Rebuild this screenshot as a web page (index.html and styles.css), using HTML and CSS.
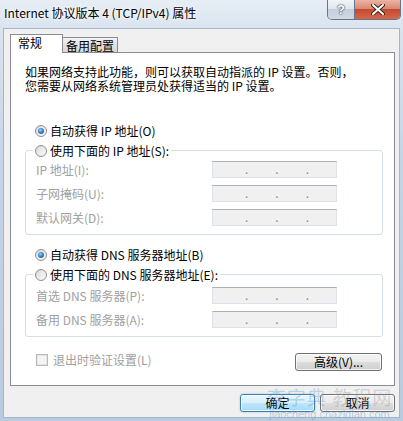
FILE: index.html
```html
<!DOCTYPE html>
<html lang="zh-CN">
<head>
<meta charset="utf-8">
<title>Internet 协议版本 4 (TCP/IPv4) 属性</title>
<link rel="stylesheet" href="styles.css">
</head>
<body>
<div class="window">
  <div class="titlebar">
    <span class="title">Internet 协议版本 4 (TCP/IPv4) 属性</span>
    <div class="caption-btns">
      <span class="cbtn help">?</span>
      <span class="cbtn close">
        <svg width="14" height="11" viewBox="0 0 14 11"><path d="M2 1 L12 10 M12 1 L2 10" stroke="#3a2520" stroke-width="4" stroke-linecap="round"/><path d="M2 1 L12 10 M12 1 L2 10" stroke="#ffffff" stroke-width="2" stroke-linecap="round"/></svg>
      </span>
    </div>
  </div>
  <div class="client">
    <div class="tabs">
      <span class="tab active">常规</span>
      <span class="tab">备用配置</span>
    </div>
    <div class="panel">
      <p class="intro">如果网络支持此功能，则可以获取自动指派的 IP 设置。否则，<br>您需要从网络系统管理员处获得适当的 IP 设置。</p>

      <div class="radio-row first"><span class="radio checked"></span>自动获得 IP 地址(O)</div>
      <div class="group">
        <div class="legend"><span class="radio"></span>使用下面的 IP 地址(S):</div>
        <div class="fields ip-fields">
          <span class="flabel">IP 地址(I):</span>
          <span class="ipbox"><span class="dot first">.</span><span class="dot">.</span><span class="dot">.</span></span>
          <span class="flabel">子网掩码(U):</span>
          <span class="ipbox"><span class="dot first">.</span><span class="dot">.</span><span class="dot">.</span></span>
          <span class="flabel">默认网关(D):</span>
          <span class="ipbox"><span class="dot first">.</span><span class="dot">.</span><span class="dot">.</span></span>
        </div>
      </div>

      <div class="radio-row"><span class="radio checked"></span>自动获得 DNS 服务器地址(B)</div>
      <div class="group">
        <div class="legend"><span class="radio"></span>使用下面的 DNS 服务器地址(E):</div>
        <div class="fields dns-fields">
          <span class="flabel">首选 DNS 服务器(P):</span>
          <span class="ipbox"><span class="dot first">.</span><span class="dot">.</span><span class="dot">.</span></span>
          <span class="flabel">备用 DNS 服务器(A):</span>
          <span class="ipbox"><span class="dot first">.</span><span class="dot">.</span><span class="dot">.</span></span>
        </div>
      </div>

      <div class="footer-row">
        <div class="check-row"><span class="checkbox"></span>退出时验证设置(L)</div>
        <span class="btn advanced">高级(V)...</span>
      </div>
    </div>
    <div class="buttons">
      <span class="btn default">确定</span>
      <span class="btn">取消</span>
    </div>
  </div>
  <div class="watermark">
    <span class="wm-big"><span class="wm-blue">查字典</span> 教程网</span>
    <span class="wm-small">jiaocheng.chazidian.com</span>
  </div>
</div>
</body>
</html>
```

FILE: styles.css
```css
html, body {
  margin: 0;
  padding: 0;
}

body {
  width: 403px;
  height: 421px;
  overflow: hidden;
  font-family: "Noto Sans CJK SC", "Liberation Sans", sans-serif;
  font-size: 12px;
  color: #000;
}

.window {
  position: relative;
  width: 403px;
  height: 421px;
  box-sizing: border-box;
  display: flex;
  flex-direction: column;
  background: linear-gradient(180deg, #e6edf5 0%, #d8e3ee 8%, #c4d4e5 40%, #b9cbde 100%);
}

/* ---------- title bar ---------- */
.titlebar {
  height: 28px;
  flex: none;
  display: flex;
  align-items: flex-start;
}

.title {
  padding: 4px 0 0 4px;
  line-height: 17px;
  font-size: 12px;
  color: #000;
  text-shadow: 0 0 6px #fff, 0 0 3px #fff;
}

.caption-btns {
  margin-left: auto;
  margin-right: 2px;
  display: flex;
  height: 20px;
  border: 1px solid #6a7585;
  border-top: none;
  border-radius: 0 0 5px 5px;
  overflow: hidden;
  box-sizing: border-box;
}

.cbtn {
  display: flex;
  align-items: center;
  justify-content: center;
  height: 19px;
}

.help {
  width: 26px;
  border-right: 1px solid #6a7585;
  background: linear-gradient(180deg, #f1f4f8 0%, #dfe6ee 45%, #c6d0dc 50%, #cfd8e3 100%);
  color: #fff;
  font-family: "Liberation Sans", sans-serif;
  font-weight: bold;
  font-size: 13px;
  text-shadow: 0 0 2px #334, 0 0 1px #223;
}

.close {
  width: 45px;
  background: linear-gradient(180deg, #edb3a4 0%, #d98a74 45%, #c64a30 50%, #d2684c 100%);
}

/* ---------- client ---------- */
.client {
  flex: 1;
  margin: 0 3px 3px 3px;
  border: 1px solid #a7b6c7;
  background: #f0f0f0;
  padding: 5px 4px 0 6px;
  display: flex;
  flex-direction: column;
}

.tabs {
  height: 18px;
  display: flex;
  align-items: flex-end;
  position: relative;
  z-index: 1;
}

.tab {
  box-sizing: border-box;
  height: 15px;
  width: 55px;
  border: 1px solid #898c95;
  border-left: none;
  border-bottom: none;
  background: linear-gradient(180deg, #f2f2f2 0%, #e3e3e3 50%, #d6d6d6 100%);
  padding-left: 3px;
  line-height: 15px;
  font-size: 12px;
}

.tab.active {
  height: 19px;
  width: 53px;
  margin-bottom: -1px;
  border-left: 1px solid #898c95;
  background: #fff;
  padding-left: 7px;
  line-height: 16px;
}

.panel {
  box-sizing: border-box;
  height: 334px;
  flex: none;
  background: #fff;
  border: 1px solid #898c95;
  padding: 12px 11px 0 14px;
}

.intro {
  margin: 0;
  line-height: 14px;
  font-size: 12px;
  white-space: nowrap;
}

.radio-row {
  display: flex;
  align-items: center;
  height: 13px;
  line-height: 13px;
  padding-left: 10px;
  margin-top: 13px;
  white-space: nowrap;
}

.radio-row.first {
  margin-top: 31px;
}

.radio {
  position: relative;
  box-sizing: border-box;
  width: 12px;
  height: 12px;
  flex: none;
  border-radius: 50%;
  border: 1px solid #8b8f95;
  background: linear-gradient(135deg, #d6d6d6 0%, #ececec 50%, #fbfbfb 100%);
  margin-right: 3px;
}

.radio.checked::after {
  content: "";
  position: absolute;
  left: 2px;
  top: 2px;
  width: 6px;
  height: 6px;
  border-radius: 50%;
  background: radial-gradient(circle at 40% 35%, #9fd4f5 0%, #3a83c4 45%, #1c4f86 100%);
}

.group {
  margin-top: 13px;
  border: 1px solid #d5dfe5;
  border-radius: 3px;
}

.legend {
  display: flex;
  align-items: center;
  width: max-content;
  height: 13px;
  line-height: 13px;
  margin: -7px 0 0 7px;
  padding: 0 2px;
  background: #fff;
  white-space: nowrap;
}

.fields {
  display: grid;
  grid-template-columns: 176px 125px;
  grid-auto-rows: 17px;
  row-gap: 7px;
  padding: 4px 0 8px 10px;
  align-items: center;
}

.dns-fields {
  padding-top: 6px;
}

.flabel {
  color: #a0a0a0;
  line-height: 17px;
  white-space: nowrap;
}

.ipbox {
  box-sizing: border-box;
  height: 17px;
  display: flex;
  border: 1px solid #dde2e8;
  border-top-color: #acb0b6;
  background: #f0f0f0;
}

.dot {
  width: 31px;
  line-height: 14px;
  color: #8d8d8d;
  font-size: 12px;
}

.dot.first {
  padding-left: 32px;
  width: 31px;
}

.footer-row {
  display: flex;
  align-items: flex-start;
  margin-top: 15px;
}

.check-row {
  display: flex;
  align-items: center;
  height: 14px;
  padding-left: 11px;
  color: #a0a0a0;
  white-space: nowrap;
}

.checkbox {
  box-sizing: border-box;
  width: 12px;
  height: 12px;
  border: 1px solid #b8b8b8;
  background: #f4f4f4;
  box-shadow: inset 0 0 0 1px #e6e6e6;
  margin-right: 5px;
  margin-top: 2px;
}

.btn {
  box-sizing: border-box;
  height: 18px;
  width: 75px;
  display: flex;
  align-items: center;
  justify-content: center;
  border: 1px solid #707070;
  border-radius: 3px;
  background: linear-gradient(180deg, #f2f2f2 0%, #ebebeb 48%, #dddddd 52%, #cfcfcf 100%);
  box-shadow: inset 0 0 0 1px rgba(255, 255, 255, 0.75);
  font-size: 12px;
  line-height: 16px;
}

.btn.advanced {
  width: 87px;
  margin-left: auto;
  margin-right: 1px;
  margin-top: 1px;
}

.buttons {
  display: flex;
  justify-content: flex-end;
  gap: 5px;
  margin-top: 8px;
}

.btn.default {
  border-color: #3c7fb1;
  background: linear-gradient(180deg, #eaf6fd 0%, #d9f0fc 48%, #bee6fd 52%, #a7d9f5 100%);
  box-shadow: inset 0 0 0 1px rgba(255, 255, 255, 0.8), 0 0 2px #7fc4ec;
}

/* ---------- watermark overlay ---------- */
.watermark {
  position: absolute;
  left: 262px;
  top: 386px;
  width: 135px;
  display: flex;
  flex-direction: column;
  align-items: center;
  pointer-events: none;
}

.wm-big {
  font-size: 19px;
  line-height: 22px;
  color: rgba(150, 150, 150, 0.35);
  letter-spacing: 1px;
  white-space: nowrap;
}

.wm-blue {
  color: rgba(90, 150, 200, 0.35);
}

.wm-small {
  font-family: "Liberation Sans", sans-serif;
  font-size: 11px;
  line-height: 12px;
  color: rgba(100, 150, 200, 0.45);
  white-space: nowrap;
}
```
